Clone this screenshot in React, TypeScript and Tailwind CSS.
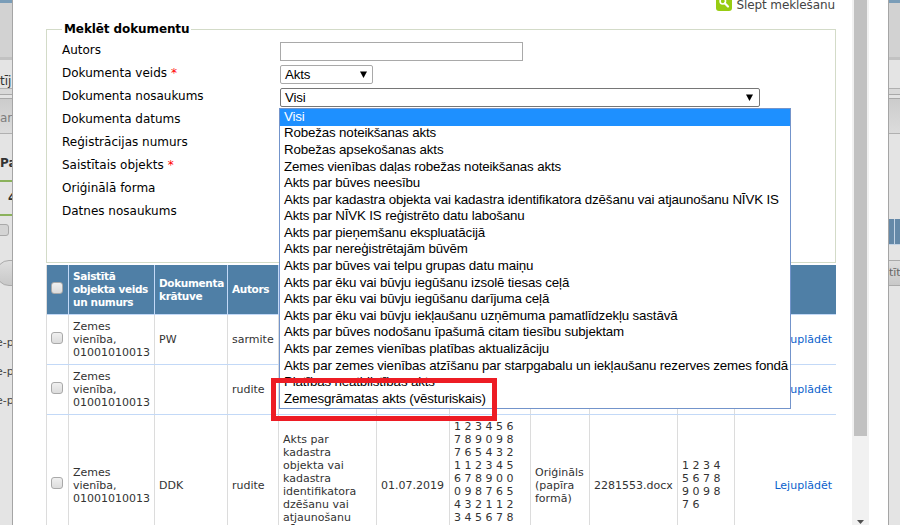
import React from "react";

const labels: { t: string; req?: boolean }[] = [
  { t: "Autors" },
  { t: "Dokumenta veids", req: true },
  { t: "Dokumenta nosaukums" },
  { t: "Dokumenta datums" },
  { t: "Reģistrācijas numurs" },
  { t: "Saistītais objekts", req: true },
  { t: "Oriģinālā forma" },
  { t: "Datnes nosaukums" },
];

const options = [
  "Visi",
  "Robežas noteikšanas akts",
  "Robežas apsekošanas akts",
  "Zemes vienības daļas robežas noteikšanas akts",
  "Akts par būves neesību",
  "Akts par kadastra objekta vai kadastra identifikatora dzēšanu vai atjaunošanu NĪVK IS",
  "Akts par NĪVK IS reģistrēto datu labošanu",
  "Akts par pieņemšanu ekspluatācijā",
  "Akts par nereģistrētajām būvēm",
  "Akts par būves vai telpu grupas datu maiņu",
  "Akts par ēku vai būvju iegūšanu izsolē tiesas ceļā",
  "Akts par ēku vai būvju iegūšanu darījuma ceļā",
  "Akts par ēku vai būvju iekļaušanu uzņēmuma pamatlīdzekļu sastāvā",
  "Akts par būves nodošanu īpašumā citam tiesību subjektam",
  "Akts par zemes vienības platības aktualizāciju",
  "Akts par zemes vienības atzīšanu par starpgabalu un iekļaušanu rezerves zemes fondā",
  "Platības neatbilstības akts",
  "Zemesgrāmatas akts (vēsturiskais)",
];

function Check() {
  return (
    <span className="block h-3 w-3 shrink-0 rounded-[3px] border border-[#a9a9a9] bg-linear-to-b from-[#f0f0f0] to-[#dcdcdc]" />
  );
}

function Cell({ w, head, right, last, lines }: { w: string; head?: boolean; right?: boolean; last?: boolean; lines: string[] }) {
  return (
    <div
      className={`${w} flex h-full shrink-0 flex-col justify-center overflow-hidden pl-1 whitespace-nowrap ${last ? "" : "border-r"} ${head ? "border-[#c3d9f7] text-[10.5px] tracking-[-0.35px]" : "border-[#dcdcdc]"} ${right ? "items-end pr-1" : ""}`}
    >
      {lines.map((l, i) => (
        <span key={i} className="block h-[13px]">{l}</span>
      ))}
    </div>
  );
}

const W = ["w-[86px]", "w-[73px]", "w-[51px]", "w-[98px]", "w-[73px]", "w-[81px]", "w-[59px]", "w-[88px]", "w-[57px]", "w-[101px]"];

const obj = ["Zemes", "vienība,", "01001010013"];
const rows: { h: string; cells: string[][] }[] = [
  { h: "h-[50px]", cells: [obj, ["PW"], ["sarmite"], [], [], [], [], [], [], ["Lejuplādēt"]] },
  { h: "h-[50px]", cells: [obj, [], ["rudite"], [], [], [], [], [], [], ["Lejuplādēt"]] },
  {
    h: "h-[141px]",
    cells: [
      obj,
      ["DDK"],
      ["rudite"],
      ["Akts par", "kadastra", "objekta vai", "kadastra", "identifikatora", "dzēšanu vai", "atjaunošanu", "NĪVK IS"],
      ["01.07.2019"],
      ["1 2 3 4 5 6", "7 8 9 0 9 8", "7 6 5 4 3 2", "1 1 2 3 4 5", "6 7 8 9 0 0", "0 9 8 7 6 5", "4 3 2 1 1 2", "3 4 5 6 7 8", "9 0 0 9 8 7", "6 5 4 3 2 1"],
      ["Oriģināls", "(papīra", "formā)"],
      ["2281553.docx"],
      ["1 2 3 4", "5 6 7 8", "9 0 9 8", "7 6"],
      ["Lejuplādēt"],
    ],
  },
];

function Arrow() {
  return (
    <svg className="h-[7px] w-[7px]" viewBox="0 0 7 7">
      <path d="M0 0.5H7L3.5 7Z" fill="#000" />
    </svg>
  );
}

function LeftStrip() {
  return (
    <div className="flex h-full w-[13px] shrink-0 flex-col overflow-hidden border-r border-[#a5a5a5] bg-[#e4e4e4] text-[13px] whitespace-nowrap text-[#333]">
      <div className="h-[3px] shrink-0 bg-[#7a9db8]" />
      <div className="h-[54px] shrink-0 bg-[#d2d2d2]" />
      <div className="h-[3px] shrink-0 bg-[#c2c2c2]" />
      <div className="flex h-[29px] shrink-0 items-end border-b border-[#b0b0b0] text-[12px] leading-[14px]">tīj</div>
      <div className="h-[6px] shrink-0 border-b border-[#a9a9a9] bg-[#d9d9d9]" />
      <div className="h-[4px] shrink-0 border-b border-[#a9a9a9]" />
      <div className="flex h-[35px] shrink-0 items-center border-b border-[#b0b0b0] bg-linear-to-b from-[#cccccc] to-[#dcdcdc] pt-1 text-[12px] text-[#7d7d7d]">ar</div>
      <div className="flex h-[46px] shrink-0 items-center pt-3 text-[12px] font-bold">Pa</div>
      <div className="h-[2px] shrink-0 bg-[#8bb25c]" />
      <div className="flex h-[32px] shrink-0 items-center pl-2 text-[12px] font-bold">4</div>
      <div className="h-[2px] shrink-0 bg-[#8bb25c]" />
      <div className="mt-2 -ml-1 h-3 w-[13px] shrink-0 rounded-[3px] border border-[#a9a9a9] bg-[#d4d4d4]" />
      <div className="mt-6 -ml-1 h-[26px] w-10 shrink-0 rounded-l-full border border-[#aaa] bg-linear-to-b from-[#dedede] to-[#c8c8c8]" />
      <div className="mt-[42px] text-[11px] leading-[29px] text-[#444]">
        <div className="-ml-1">e-p</div>
        <div className="-ml-1">e-p</div>
        <div className="-ml-1">e-p</div>
      </div>
    </div>
  );
}

function RightStrip() {
  return (
    <div className="flex h-full w-3 shrink-0 flex-col overflow-hidden border-l border-[#a5a5a5] bg-[#e4e4e4] whitespace-nowrap">
      <div className="h-[3px] shrink-0 bg-[#7a9db8]" />
      <div className="h-[54px] shrink-0 bg-[#d2d2d2]" />
      <div className="h-[3px] shrink-0 bg-[#c2c2c2]" />
      <div className="h-[29px] shrink-0 border-b border-[#b0b0b0]" />
      <div className="h-[6px] shrink-0 border-b border-[#a9a9a9] bg-[#d9d9d9]" />
      <div className="h-[4px] shrink-0 border-b border-[#a9a9a9]" />
      <div className="h-[35px] shrink-0 border-b border-[#b0b0b0] bg-linear-to-b from-[#cccccc] to-[#dcdcdc]" />
      <div className="h-[85px] shrink-0" />
      <div className="flex h-[26px] shrink-0 border-b border-[#c3d3e4] bg-[#6589a8]">
        <div className="w-[6px] border-r border-[#c3d3e4]" />
      </div>
      <div className="h-[16px] shrink-0 border-b border-[#aaa]" />
      <div className="flex h-[25px] shrink-0 items-center border-b border-[#aaa] bg-linear-to-b from-[#dedede] to-[#c8c8c8] text-[11px] text-[#666]">tīt</div>
    </div>
  );
}

export default function App() {
  return (
    <div className="relative flex h-[525px] w-[900px] overflow-hidden bg-white font-['DejaVu_Sans',sans-serif]">
      <LeftStrip />
      <main className="h-full w-[839px] shrink-0 overflow-hidden pl-[33px]">
        <div className="flex h-[29px] w-[790px] justify-end pr-px">
          <svg className="-mt-[5px] h-4 w-4" viewBox="0 0 16 16">
            <rect width="16" height="16" rx="3" fill="#97cc12" />
            <circle cx="6.8" cy="6.3" r="2.7" fill="none" stroke="#fff" strokeWidth="1.6" />
            <path d="M8.8 8.3L12 11.5" stroke="#fff" strokeWidth="2.2" strokeLinecap="round" />
          </svg>
          <span className="-mt-[5px] ml-1 h-5 text-[12px] leading-5 tracking-[-0.1px] text-[#444]">Slēpt meklēšanu</span>
        </div>
        <fieldset className="-mt-[10px] h-[244px] w-[790px] border border-[#d3dbc8]">
          <legend className="ml-[15px] h-5 px-[2px] text-[12px] leading-5 font-bold tracking-[-0.1px] text-black">Meklēt dokumentu</legend>
          <div className="-mt-px flex">
            <div className="w-[233px] pl-[15px] text-[12px] text-black">
              {labels.map((l) => (
                <div key={l.t} className="flex h-[23px] items-center whitespace-nowrap">
                  <span>{l.t}</span>
                  {l.req && <span className="ml-1 text-[#f00]">*</span>}
                </div>
              ))}
            </div>
            <div className="pt-1 font-['Liberation_Sans',sans-serif] text-[13.33px] tracking-[-0.15px] text-black">
              <div className="h-[19px] w-[243px] border border-[#a9a9a9]" />
              <div className="mt-1 flex h-[19px] w-[93px] items-center justify-between rounded-[2px] border border-[#a9a9a9] pr-[5px] pl-1">
                Akts
                <Arrow />
              </div>
              <div className="mt-1 flex h-[19px] w-[480px] items-center justify-between rounded-[2px] border border-[#767676] pr-[6px] pl-1">
                Visi
                <Arrow />
              </div>
            </div>
          </div>
        </fieldset>
        <div className="mt-[2px] w-[790px] border-l border-[#dcdcdc] text-[11px] leading-[13px] text-[#333]">
          <div className="flex h-[50px] border-b border-[#c3d9f7] bg-[#4f7fa6] font-bold text-white">
            <div className="flex w-[22px] shrink-0 items-center border-r border-[#c3d9f7] pb-1 pl-1"><Check /></div>
            {[["Saistītā", "objekta veids", "un numurs"], ["Dokumenta", "krātuve"], ["Autors"], [], [], [], [], [], [], []].map((c, i) => (
              <Cell key={i} w={W[i]} head last={i === 9} lines={c} />
            ))}
          </div>
          {rows.map((r, ri) => (
            <div key={ri} className={`${r.h} flex border-b border-[#c3d9f7]`}>
              <div className="flex w-[22px] shrink-0 items-center border-r border-[#dcdcdc] pb-1 pl-1"><Check /></div>
              {r.cells.map((c, i) => (
                <Cell key={i} w={i === 9 ? "w-[101px] text-[#0b5fcc]" : W[i]} right={i === 9} last={i === 9} lines={c} />
              ))}
            </div>
          ))}
        </div>
      </main>
      <div className="flex h-full w-[17px] shrink-0 flex-col items-center bg-[#f1f1f1]">
        <div className="h-[436px] w-[13px] bg-[#c1c1c1]" />
        <svg className="mt-[84px] h-1 w-[7px]" viewBox="0 0 7 4">
          <path d="M0 0H7L3.5 4Z" fill="#505050" />
        </svg>
      </div>
      <div className="w-[19px] shrink-0" />
      <RightStrip />

      <ul className="absolute top-[108px] left-[279px] h-[301px] w-[512px] border border-[#7394cb] bg-white font-['Liberation_Sans',sans-serif] text-[13.33px] tracking-[-0.15px] text-black">
        {options.map((o, i) => (
          <li key={o} className={`flex items-center pb-0.5 pl-1 whitespace-nowrap ${i === 0 ? "h-[17px] bg-[#1e90ff] text-white" : "h-[16.6px]"}`}>
            {o}
          </li>
        ))}
      </ul>
      <div className="absolute top-[378px] left-[271px] h-[43px] w-[226px] border-5 border-[#ed1c24]" />
    </div>
  );
}
